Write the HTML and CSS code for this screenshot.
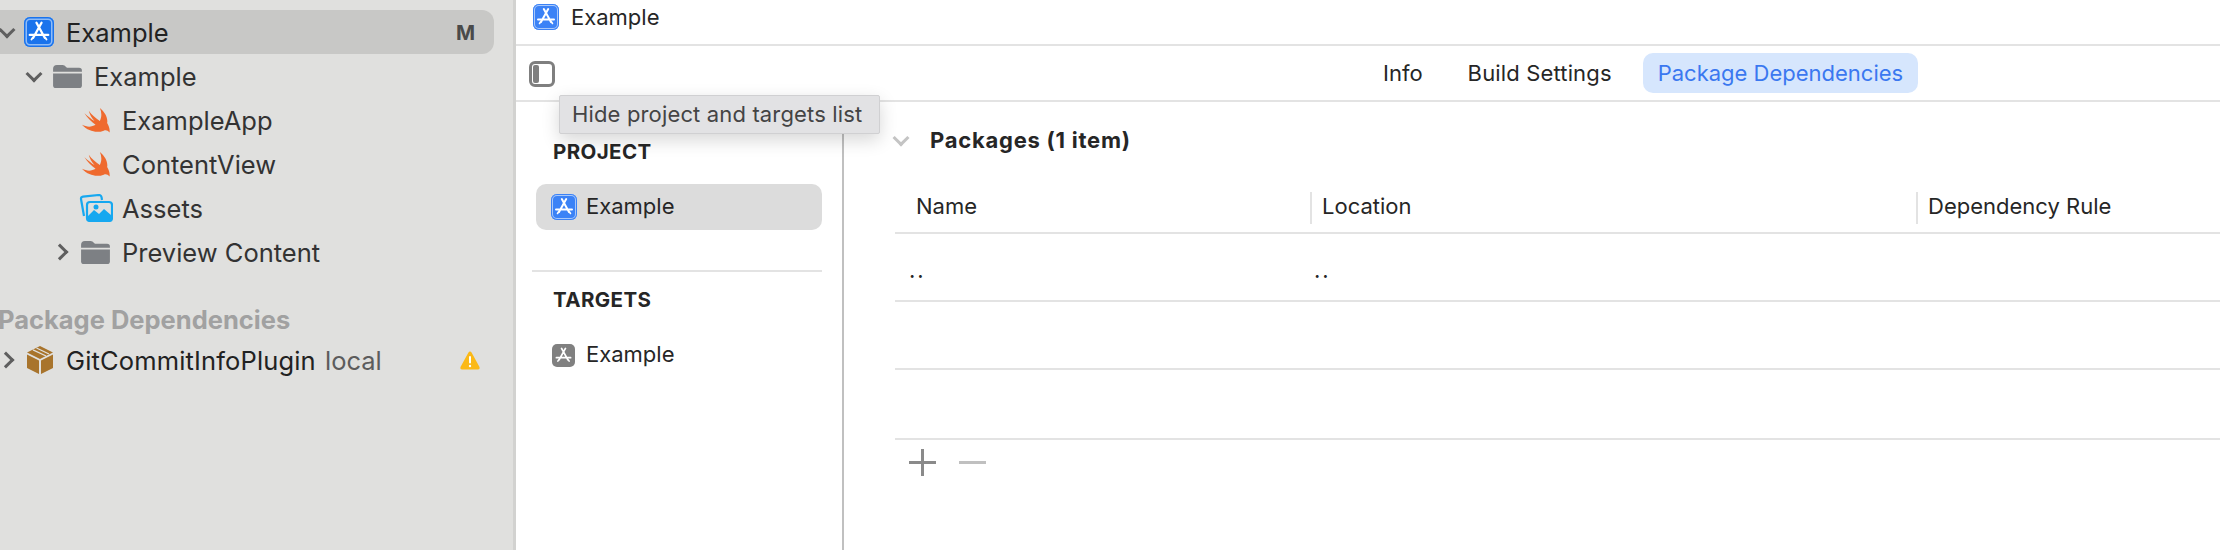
FILE: index.html
```html
<!DOCTYPE html>
<html>
  <head>
    <meta charset="utf-8">
    <title>Example</title>
    <link rel="stylesheet" href="styles.css">
  </head>
  <body>
    <svg class="defs" width="0" height="0">
      <symbol id="appGlyph" viewBox="0 0 26 26">
        <path d="M10.800 5 L18 18 M15.200 5 L8 18 M5 15.500 H21" fill="none" stroke="#fff" stroke-width="2" stroke-linecap="round"/>
        <path d="M6.500 19.500 L7.500 18 M19.500 19.500 L18.500 18" fill="none" stroke="#fff" stroke-width="1.600" stroke-linecap="round"/>
      </symbol>
      <symbol id="folder" viewBox="0 0 30 26">
        <path d="M0 5 Q0 1 4 1 H10 Q12 1 13.500 3 L14.500 4 H27 Q30 4 30 7 V8 H0 Z" fill="#7d8084"/>
        <path d="M0 10 H30 V22 Q30 25 27 25 H3 Q0 25 0 22 Z" fill="#7d8084"/>
      </symbol>
      <symbol id="swift" viewBox="0 0 30 26">
        <path d="M18.500 0.500 C24 5 27 11 26 16 C28 19 29 23 28.500 26 C26.500 23.500 24.500 23 22.500 24 C16 26.500 7 25.500 0 18 C5 20.500 10 20.500 14 18 C9.500 14.500 5.500 10.500 2.500 6 C6.500 9.500 10 12.500 13 14 C10 11 8 7.500 7 3.500 C10 7.500 14 11.500 18.500 14 C20.500 10 20.500 5 18.500 0.500 Z" fill="#ef6a2e"/>
      </symbol>
    </svg>

    <div class="window">
      <div class="sidebar">
        <div class="row row-selected">
          <span class="chevron chevron-down level0"></span>
          <span class="app-icon app-icon-blue app-icon-big"><svg><use href="#appGlyph"/></svg></span>
          <span class="row-name name-dark">Example</span>
          <span class="badge">M</span>
        </div>
        <div class="row">
          <span class="chevron chevron-down level1"></span>
          <svg class="folder-icon folder-level1"><use href="#folder"/></svg>
          <span class="row-name name-level1">Example</span>
        </div>
        <div class="row">
          <svg class="file-icon"><use href="#swift"/></svg>
          <span class="row-name">ExampleApp</span>
        </div>
        <div class="row">
          <svg class="file-icon"><use href="#swift"/></svg>
          <span class="row-name">ContentView</span>
        </div>
        <div class="row">
          <svg class="assets-icon" viewBox="0 0 34 28">
            <path d="M5 22 L2 5 Q1.800 3 4 2.600 L20 1 Q22 1 22.500 3 L23 6" fill="none" stroke="#16a8f0" stroke-width="2.200"/>
            <rect x="8" y="8" width="25" height="19" rx="3" fill="none" stroke="#16a8f0" stroke-width="2.200"/>
            <path d="M9 26 V22 L15 16 L20 20 L25 15 L32 21 V26 Z" fill="#16a8f0"/>
            <circle cx="17" cy="13" r="2.500" fill="#16a8f0"/>
          </svg>
          <span class="row-name">Assets</span>
        </div>
        <div class="row">
          <span class="chevron chevron-right level2"></span>
          <svg class="folder-icon"><use href="#folder"/></svg>
          <span class="row-name">Preview Content</span>
        </div>
        <div class="group-title">Package Dependencies</div>
        <div class="row row-package">
          <span class="chevron chevron-right level3"></span>
          <svg class="package-icon" viewBox="0 0 26 28">
            <path d="M13 0 L26 6.500 L13 13 L0 6.500 Z" fill="#a8742c"/>
            <path d="M0 8.500 L12 14.500 V28 L0 22 Z" fill="#a8742c"/>
            <path d="M26 8.500 L14 14.500 V28 L26 22 Z" fill="#a8742c"/>
            <path d="M6 3.800 L19 10 M9.500 2 L22 8" stroke="#e0e0de" stroke-width="1.300"/>
          </svg>
          <span class="row-name name-dark name-package">GitCommitInfoPlugin</span>
          <span class="row-note">local</span>
          <svg class="warn-icon" viewBox="0 0 20 19">
            <path d="M10 0.500 Q11 0.500 11.700 1.800 L19.500 16 Q20 18.500 18 18.500 H2 Q0 18.500 0.500 16 L8.300 1.800 Q9 0.500 10 0.500 Z" fill="#fbb917"/>
            <rect x="9" y="5" width="2" height="7.500" rx="1" fill="#fff"/>
            <circle cx="10" cy="15" r="1.200" fill="#fff"/>
          </svg>
        </div>
      </div>

      <div class="main">
        <div class="crumbs">
          <span class="app-icon app-icon-blue"><svg><use href="#appGlyph"/></svg></span>
          <span class="crumb-name">Example</span>
        </div>
        <div class="tabbar">
          <span class="toggle"><span class="toggle-bar"></span></span>
          <div class="tabs">
            <span class="tab">Info</span>
            <span class="tab tab-wide">Build Settings</span>
            <span class="tab tab-active">Package Dependencies</span>
          </div>
        </div>
        <div class="tooltip">Hide project and targets list</div>
        <div class="content">
          <div class="targets">
            <div class="list-title title-project">PROJECT</div>
            <div class="list-item list-item-selected">
              <span class="app-icon app-icon-blue"><svg><use href="#appGlyph"/></svg></span>
              <span class="list-name">Example</span>
            </div>
            <div class="list-rule"></div>
            <div class="list-title">TARGETS</div>
            <div class="list-item list-item-target">
              <span class="app-icon app-icon-gray"><svg><use href="#appGlyph"/></svg></span>
              <span class="list-name">Example</span>
            </div>
          </div>
          <div class="packages">
            <div class="packages-head">
              <span class="chevron chevron-down chevron-pale"></span>
              <span class="packages-title">Packages (1 item)</span>
            </div>
            <div class="table-row table-header">
              <div class="cell cell-name">Name</div>
              <div class="cell cell-location">Location</div>
              <div class="cell cell-rule">Dependency Rule</div>
            </div>
            <div class="table-row table-body">
              <div class="cell cell-name cell-dots">..</div>
              <div class="cell cell-location cell-dots">..</div>
            </div>
            <div class="table-row table-body"></div>
            <div class="table-row table-last"></div>
            <div class="table-tools">
              <span class="tool-plus"></span>
              <span class="tool-minus"></span>
            </div>
          </div>
        </div>
      </div>
    </div>
  </body>
</html>
```

FILE: styles.css
```css
html, body {
  margin: 0;
  padding: 0;
  height: 100%;
  overflow: hidden;
  background-color: #fff;
  font-family: Inter, "Liberation Sans", sans-serif;
  color: #262626;
}

.defs {
  display: block;
  height: 0;
}

.window {
  display: flex;
  height: 550px;
}

/* left navigator */

.sidebar {
  width: 516px;
  flex-shrink: 0;
  padding-top: 10px;
  box-sizing: border-box;
  background-color: #e0e0de;
  border-right: 3px solid #d2d2d0;
  font-size: 25.500px;
}

.row {
  display: flex;
  align-items: center;
  height: 44px;
  width: 494px;
  color: #333;
  position: relative;
}

.row-selected {
  background-color: #c8c8c6;
  border-radius: 0 12px 12px 0;
}

.row-name {
  position: absolute;
  left: 122px;
  margin-top: 1px;
}

.name-dark {
  left: 66px;
  color: #222;
}

.name-level1 {
  left: 94px;
}

.name-package {
  letter-spacing: 0.150px;
}

.badge {
  position: absolute;
  left: 456px;
  font-weight: 700;
  font-size: 20.500px;
  color: #4a4a4a;
}

.chevron {
  position: absolute;
  width: 10px;
  height: 10px;
  border-right: 3px solid #5f5f5f;
  border-bottom: 3px solid #5f5f5f;
  box-sizing: border-box;
  display: block;
}

.chevron-down {
  transform: rotate(45deg);
  margin-top: -4px;
  width: 12px;
  height: 12px;
}

.chevron-right {
  transform: rotate(-45deg);
  width: 12px;
  height: 12px;
}

.level0 { left: 1px; }
.level1 { left: 28px; }
.level2 { left: 54px; }
.level3 { left: 0px; }

.app-icon {
  display: inline-block;
  width: 26px;
  height: 26px;
  flex-shrink: 0;
  border-radius: 6px;
  box-sizing: border-box;
}

.app-icon svg {
  display: block;
  width: 100%;
  height: 100%;
}

.app-icon-blue {
  background-color: #3b82f6;
  box-shadow: inset 0 0 0 1px #3b82f6, inset 0 0 0 2px #a8c8fa;
}

.app-icon-gray {
  background-color: #808080;
  width: 23px;
  height: 23px;
  margin: 0 1px 0 1px;
  border-radius: 5px;
}

.app-icon-big {
  position: absolute;
  left: 24px;
  width: 30px;
  height: 30px;
  background-color: #1a73ec;
  box-shadow: inset 0 0 0 1.500px #1a73ec, inset 0 0 0 3px #8fbcf7;
}

.folder-icon {
  position: absolute;
  left: 81px;
  width: 29px;
  height: 25px;
}

.folder-level1 {
  left: 53px;
}

.file-icon {
  position: absolute;
  left: 82px;
  width: 29px;
  height: 26px;
}

.assets-icon {
  position: absolute;
  left: 79px;
  width: 34px;
  height: 28px;
}

.group-title {
  margin-top: 32px;
  margin-left: -2px;
  height: 28px;
  line-height: 28px;
  font-weight: 700;
  color: #a1a1a1;
  white-space: nowrap;
}

.row-package {
  margin-top: 4px;
}

.package-icon {
  position: absolute;
  left: 27px;
  width: 26px;
  height: 28px;
}

.row-note {
  position: absolute;
  left: 325px;
  margin-top: 1px;
  color: #5c5c5c;
}

.warn-icon {
  position: absolute;
  left: 460px;
  width: 20px;
  height: 19px;
}

/* editor */

.main {
  flex: 1;
  min-width: 0;
  position: relative;
  background-color: #fff;
  font-size: 22px;
}

.crumbs {
  display: flex;
  align-items: center;
  gap: 12px;
  height: 44px;
  padding: 0 0 10px 17px;
  box-sizing: border-box;
}

.tabbar {
  height: 58px;
  box-sizing: border-box;
  display: flex;
  align-items: center;
  border-top: 2px solid #e3e3e3;
  border-bottom: 2px solid #e3e3e3;
  position: relative;
}

.toggle {
  position: absolute;
  left: 13px;
  top: 15px;
  width: 26px;
  height: 26px;
  box-sizing: border-box;
  border: 3px solid #7f7f7f;
  border-radius: 6px;
  padding: 1px;
}

.toggle-bar {
  display: block;
  width: 6px;
  height: 100%;
  border-radius: 2px;
  background-color: #7f7f7f;
}

.tabs {
  display: flex;
  align-items: center;
  margin-left: 867px;
  gap: 45px;
}

.tab {
  white-space: nowrap;
}

.tab-wide {
  letter-spacing: 0.150px;
}

.tab-active {
  margin-left: -14px;
  padding: 0 15px;
  height: 40px;
  line-height: 40px;
  border-radius: 10px;
  background-color: #d6e6fd;
  color: #3a78f0;
}

.tooltip {
  position: absolute;
  left: 43px;
  top: 95px;
  width: 321px;
  height: 39px;
  line-height: 37px;
  box-sizing: border-box;
  padding-left: 12px;
  background-color: #e2e2e4;
  border: 1px solid #d0d0d2;
  border-radius: 2px;
  box-shadow: 0 6px 18px rgba(0, 0, 0, 0.16);
  letter-spacing: 0.150px;
  color: #444;
  white-space: nowrap;
  z-index: 5;
}

.content {
  display: flex;
  height: 448px;
}

.targets {
  width: 328px;
  flex-shrink: 0;
  box-sizing: border-box;
  border-right: 2px solid #c0c0c0;
  padding: 0 20px 0 16px;
}

.list-title {
  height: 28px;
  line-height: 28px;
  margin-left: 21px;
  font-weight: 700;
  font-size: 20.500px;
  letter-spacing: 0.400px;
}

.title-project {
  margin-top: 36px;
}

.list-item {
  display: flex;
  align-items: center;
  gap: 9px;
  height: 46px;
  margin-left: 4px;
  padding-left: 15px;
  margin-top: 18px;
}

.list-item-target {
  gap: 10px;
}

.list-name {
  margin-bottom: 2px;
}

.list-item-selected {
  background-color: #dcdcdc;
  border-radius: 10px;
  width: 286px;
  box-sizing: border-box;
}

.list-rule {
  height: 2px;
  margin-top: 40px;
  margin-bottom: 14px;
  background-color: #e3e3e3;
}

.packages {
  flex: 1;
  min-width: 0;
  padding-left: 51px;
}

.packages-head {
  display: flex;
  align-items: center;
  position: relative;
  height: 28px;
  margin-top: 24px;
  padding-left: 35px;
}

.chevron-pale {
  left: 0;
  border-color: #c4c4c4;
}

.packages-title {
  font-weight: 700;
  letter-spacing: 0.750px;
}

.table-row {
  display: flex;
  height: 68px;
  box-sizing: border-box;
  border-bottom: 2px solid #e3e3e3;
}

.table-header {
  height: 80px;
  padding-top: 38px;
}

.table-last {
  height: 70px;
}

.cell {
  box-sizing: border-box;
  line-height: 32px;
  white-space: nowrap;
}

.cell-name {
  width: 415px;
  padding-left: 21px;
}

.cell-location {
  width: 606px;
  padding-left: 10px;
}

.cell-rule {
  padding-left: 10px;
}

.table-header .cell {
  height: 32px;
  line-height: 28px;
}

.table-header .cell-location,
.table-header .cell-rule {
  border-left: 2px solid #e3e3e3;
}

.cell-dots {
  margin-top: 20px;
  letter-spacing: 2px;
}

.cell-dots.cell-name {
  padding-left: 14px;
}

.cell-dots.cell-location {
  padding-left: 4px;
}

.table-tools {
  display: flex;
  align-items: center;
  gap: 23px;
  height: 44px;
  padding-left: 14px;
}

.tool-plus {
  width: 27px;
  height: 27px;
  background:
    linear-gradient(#8a8a8a, #8a8a8a) center / 100% 3px no-repeat,
    linear-gradient(#8a8a8a, #8a8a8a) center / 3px 100% no-repeat;
}

.tool-minus {
  width: 27px;
  height: 3px;
  background-color: #c0c0c0;
}
```
